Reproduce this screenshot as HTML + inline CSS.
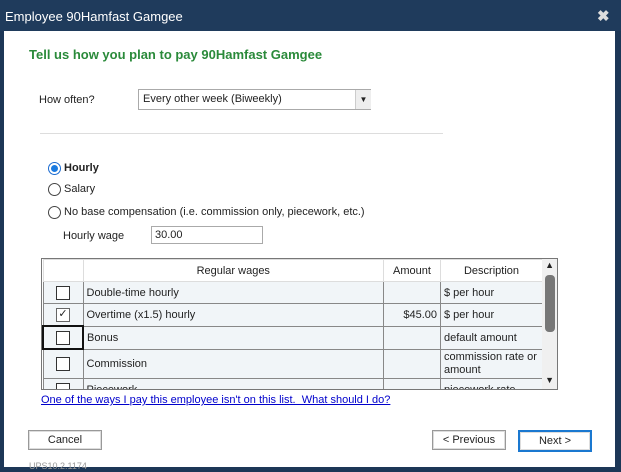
<!DOCTYPE html><html><head><style>
body{margin:0;width:621px;height:472px;overflow:hidden;background:#1d3757;font-family:"Liberation Sans",sans-serif;font-size:11px;color:#222;position:relative}
.a{position:absolute}
.white{left:4px;top:31px;width:611px;height:436px;background:#fff}
.tb{left:0;top:0;width:621px;height:31px;background:#1f3b5c}
td{border:1px solid #888;padding:0 3px;height:21px;background:#f1f5f8}
table{border-collapse:collapse;font-size:11px;table-layout:fixed}
.cb{width:12px;height:12px;border:1px solid #333;background:#fff;margin:auto}
.btn{border:1px solid #999;background:#fff;height:18px;text-align:center;line-height:18px;font-size:11px;box-shadow:inset 0 0 0 1px #ddd}
.rad{width:11px;height:11px;border:1px solid #444;border-radius:50%;background:#fff}
</style></head><body>
<div class="a tb"></div>
<div class="a" style="left:5px;top:9px;color:#fff;font-size:13px">Employee 90Hamfast Gamgee</div>
<div class="a" style="left:597px;top:7px;color:#ddd;font-size:15px;font-weight:bold">✖</div>
<div class="a white"></div>
<div class="a" style="left:29px;top:47px;color:#2a8a3a;font-size:13px;font-weight:bold">Tell us how you plan to pay 90Hamfast Gamgee</div>
<div class="a" style="left:39px;top:94px">How often?</div>
<div class="a" style="left:138px;top:89px;width:233px;height:21px;border:1px solid #aaa;box-sizing:border-box;background:#fff;padding:3px 4px">Every other week (Biweekly)</div>
<div class="a" style="left:355px;top:90px;width:15px;height:19px;background:#eee;border-left:1px solid #ccc;font-size:8px;text-align:center;line-height:19px">▼</div>
<div class="a" style="left:40px;top:133px;width:403px;height:1px;background:#ddd"></div>
<div class="a rad" style="left:48px;top:162px;border-color:#1a6ad0"><div style="width:7px;height:7px;border-radius:50%;background:#1a7ae0;margin:2px"></div></div>
<div class="a" style="left:64px;top:162px;font-weight:bold">Hourly</div>
<div class="a rad" style="left:48px;top:183px"></div><div class="a" style="left:64px;top:183px">Salary</div>
<div class="a rad" style="left:48px;top:206px"></div><div class="a" style="left:64px;top:206px">No base compensation (i.e. commission only, piecework, etc.)</div>
<div class="a" style="left:63px;top:230px">Hourly wage</div>
<div class="a" style="left:151px;top:226px;width:112px;height:18px;border:1px solid #aaa;box-sizing:border-box;padding:2px 3px">30.00</div>
<div class="a" style="left:41px;top:258px;width:517px;height:132px;border:1px solid #777;box-sizing:border-box;overflow:hidden;background:#fff">
<table style="width:501px">
<col style="width:40px"><col><col style="width:57px"><col style="width:102px">
<tr><td style="background:#fff;border-color:#ddd"></td><td style="background:#fff;border-color:#ddd;text-align:center">Regular wages</td><td style="background:#fff;border-color:#ddd;text-align:center">Amount</td><td style="background:#fff;border-color:#ddd;text-align:center">Description</td></tr>
<tr><td><div class="cb"></div></td><td>Double-time hourly</td><td></td><td>$ per hour</td></tr>
<tr><td><div class="cb" style="border-color:#666;font-size:11px;line-height:11px;text-align:center">✓</div></td><td>Overtime (x1.5) hourly</td><td style="text-align:right">$45.00</td><td>$ per hour</td></tr>
<tr><td style="border:2px solid #111"><div class="cb"></div></td><td>Bonus</td><td></td><td>default amount</td></tr>
<tr><td style="height:28px"><div class="cb"></div></td><td>Commission</td><td></td><td style="line-height:13px">commission rate or amount</td></tr>
<tr><td><div class="cb"></div></td><td>Piecework</td><td></td><td>piecework rate</td></tr>
</table>
<div class="a" style="right:0;top:0;width:15px;height:130px;background:#f0f0f0"></div>
<div class="a" style="right:2px;top:16px;width:10px;height:57px;background:#777;border-radius:4px"></div>
<div class="a" style="right:3px;top:1px;font-size:9px">▲</div>
<div class="a" style="right:3px;top:116px;font-size:9px">▼</div>
</div>
<div class="a" style="left:41px;top:394px;color:#00c;text-decoration:underline">One of the ways I pay this employee isn't on this list.&nbsp; What should I do?</div>
<div class="a btn" style="left:28px;top:430px;width:72px">Cancel</div>
<div class="a btn" style="left:432px;top:430px;width:72px">&lt; Previous</div>
<div class="a btn" style="left:518px;top:430px;width:70px;border:2px solid #1a78d0">Next &gt;</div>
<div class="a" style="left:29px;top:461px;color:#999;font-size:9px">UPS10.2.1174</div>
</body></html>
